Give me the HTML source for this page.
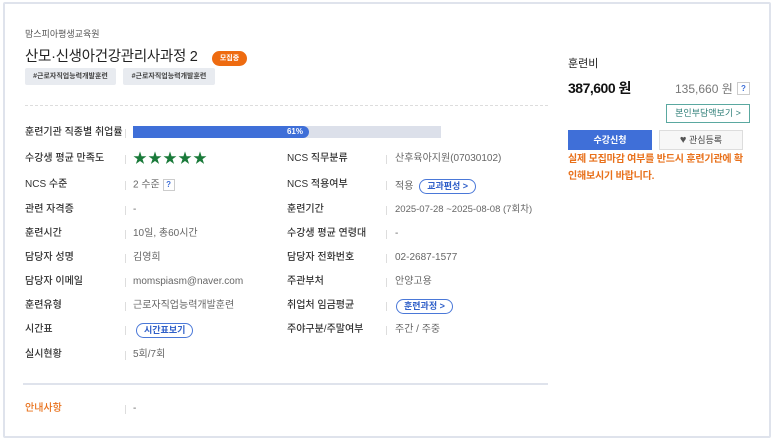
<!DOCTYPE html>
<html><head><meta charset="utf-8"><style>
*{margin:0;padding:0;box-sizing:border-box}
body{width:773px;height:440px;background:#fff;font-family:"Liberation Sans","Noto Sans CJK KR",sans-serif;position:relative;overflow:hidden;color:#333}
.a{position:absolute;white-space:nowrap;line-height:12px}
.frame{position:absolute;left:3px;top:2px;width:768px;height:436px;border:2px solid #dfe3ec;border-radius:2px}
.lbl{font-size:10px;color:#333;font-weight:500;margin-top:2px}
.val{font-size:10px;color:#666;margin-top:2px}
.sep{position:absolute;width:1px;height:9px;background:#ddd;margin-top:2px}
.mt{margin-top:2px}
.tag{position:absolute;top:68px;height:17px;background:#e8ebf0;border-radius:2px;font-size:7px;color:#444;text-align:center;line-height:17px;font-weight:bold}
.pill{display:inline-block;border:1px solid #4a78d8;border-radius:9px;color:#2f5fc8;font-size:9px;font-weight:bold;padding:0 7px;height:15px;line-height:13px;vertical-align:middle}
.q{display:inline-block;width:12px;height:12px;border:1px solid #ccc;color:#3f6fd8;font-size:8px;font-weight:bold;text-align:center;line-height:10px;vertical-align:middle}
</style></head><body>
<div class="frame"></div>
<div class="a" style="left:25px;top:28px;font-size:9px;color:#555">맘스피아평생교육원</div>
<div class="a" style="left:25px;top:48px;font-size:14.5px;color:#222;line-height:18px;letter-spacing:-0.3px">산모·신생아건강관리사과정 2</div>
<div class="a" style="left:212px;top:51px;width:35px;height:15px;background:#ee6b10;border-radius:8px;color:#fff;font-size:7px;font-weight:bold;text-align:center;line-height:15px">모집중</div>
<div class="tag" style="left:25px;width:91px">#근로자직업능력개발훈련</div>
<div class="tag" style="left:123px;width:92px">#근로자직업능력개발훈련</div>
<div class="a" style="left:25px;top:105px;width:523px;border-top:1px dashed #ddd"></div>

<div class="a lbl" style="left:25px;top:125px">훈련기관 직종별 취업률</div>
<div class="sep" style="left:125px;top:127px"></div>
<div class="a" style="left:133px;top:126px;width:308px;height:12px;background:#dce0ea"></div>
<div class="a" style="left:133px;top:126px;width:176px;height:12px;background:#3f6fd8;border-radius:0 6px 6px 0;color:#fff;font-size:8px;font-weight:bold;text-align:right;padding-right:6px;line-height:12px">61%</div>

<div class="a lbl" style="left:25px;top:151px">수강생 평균 만족도</div>
<div class="sep" style="left:125px;top:153px"></div>
<div class="a" style="left:133px;top:150px;font-size:14px;line-height:16px;color:#1a7a3a;letter-spacing:1px">★★★★★</div>
<div class="a lbl" style="left:287px;top:151px">NCS 직무분류</div>
<div class="sep" style="left:386px;top:153px"></div>
<div class="a val" style="left:395px;top:151px">산후육아지원(07030102)</div>

<div class="a lbl" style="left:25px;top:177px">NCS 수준</div>
<div class="sep" style="left:125px;top:179px"></div>
<div class="a val" style="left:133px;top:177px">2 수준 <span class="q">?</span></div>
<div class="a lbl" style="left:287px;top:177px">NCS 적용여부</div>
<div class="sep" style="left:386px;top:179px"></div>
<div class="a val" style="left:395px;top:177px">적용 <span class="pill" style="margin-left:3px">교과편성 &gt;</span></div>

<div class="a lbl" style="left:25px;top:202px">관련 자격증</div>
<div class="sep" style="left:125px;top:204px"></div>
<div class="a val" style="left:133px;top:202px">-</div>
<div class="a lbl" style="left:287px;top:202px">훈련기간</div>
<div class="sep" style="left:386px;top:204px"></div>
<div class="a val" style="left:395px;top:202px;font-size:9.5px">2025-07-28 ~2025-08-08 (7회차)</div>

<div class="a lbl" style="left:25px;top:226px">훈련시간</div>
<div class="sep" style="left:125px;top:228px"></div>
<div class="a val" style="left:133px;top:226px">10일, 총60시간</div>
<div class="a lbl" style="left:287px;top:226px">수강생 평균 연령대</div>
<div class="sep" style="left:386px;top:228px"></div>
<div class="a val" style="left:395px;top:226px">-</div>

<div class="a lbl" style="left:25px;top:250px">담당자 성명</div>
<div class="sep" style="left:125px;top:252px"></div>
<div class="a val" style="left:133px;top:250px">김영희</div>
<div class="a lbl" style="left:287px;top:250px">담당자 전화번호</div>
<div class="sep" style="left:386px;top:252px"></div>
<div class="a val" style="left:395px;top:250px">02-2687-1577</div>

<div class="a lbl" style="left:25px;top:274px">담당자 이메일</div>
<div class="sep" style="left:125px;top:276px"></div>
<div class="a val" style="left:133px;top:274px">momspiasm@naver.com</div>
<div class="a lbl" style="left:287px;top:274px">주관부처</div>
<div class="sep" style="left:386px;top:276px"></div>
<div class="a val" style="left:395px;top:274px">안양고용</div>

<div class="a lbl" style="left:25px;top:298px">훈련유형</div>
<div class="sep" style="left:125px;top:300px"></div>
<div class="a val" style="left:133px;top:298px">근로자직업능력개발훈련</div>
<div class="a lbl" style="left:287px;top:298px">취업처 임금평균</div>
<div class="sep" style="left:386px;top:300px"></div>
<div class="a mt" style="left:396px;top:297px;line-height:15px"><span class="pill">훈련과정 &gt;</span></div>

<div class="a lbl" style="left:25px;top:322px">시간표</div>
<div class="sep" style="left:125px;top:324px"></div>
<div class="a mt" style="left:136px;top:321px;line-height:15px"><span class="pill">시간표보기</span></div>
<div class="a lbl" style="left:287px;top:322px">주야구분/주말여부</div>
<div class="sep" style="left:386px;top:324px"></div>
<div class="a val" style="left:395px;top:322px">주간 / 주중</div>

<div class="a lbl" style="left:25px;top:347px">실시현황</div>
<div class="sep" style="left:125px;top:349px"></div>
<div class="a val" style="left:133px;top:347px">5회/7회</div>

<div class="a" style="left:23px;top:383px;width:525px;height:2px;background:#dfe3ec"></div>
<div class="a mt" style="left:25px;top:401px;font-size:10px;color:#e8701a;font-weight:500">안내사항</div>
<div class="sep" style="left:125px;top:403px"></div>
<div class="a val" style="left:133px;top:401px">-</div>

<div class="a" style="left:568px;top:58px;font-size:11px;color:#222">훈련비</div>
<div class="a" style="left:568px;top:80px;font-size:14px;line-height:16px;color:#111;font-weight:bold;letter-spacing:-0.5px">387,600 원</div>
<div class="a" style="left:675px;top:82px;font-size:12px;line-height:14px;color:#777">135,660 원</div>
<div class="a" style="left:737px;top:82px"><span class="q" style="width:13px;height:13px;line-height:11px">?</span></div>
<div class="a" style="left:666px;top:104px;width:84px;height:19px;border:1px solid #5aa8a0;color:#2f7f78;font-size:9px;text-align:center;line-height:17px">본인부담액보기 &gt;</div>
<div class="a" style="left:568px;top:130px;width:84px;height:20px;background:#3f6fd8;color:#fff;font-size:9px;font-weight:bold;text-align:center;line-height:20px">수강신청</div>
<div class="a" style="left:659px;top:130px;width:84px;height:20px;background:#f7f7f7;border:1px solid #ddd;color:#444;font-size:9px;text-align:center;line-height:18px"><span style="color:#555;font-size:11px">♥</span> 관심등록</div>
<div class="a" style="left:568px;top:151px;font-size:10px;color:#e8701a;font-weight:bold;line-height:17px;white-space:normal;width:200px;letter-spacing:-0.2px">실제 모집마감 여부를 반드시 훈련기관에 확<br>인해보시기 바랍니다.</div>
</body></html>
